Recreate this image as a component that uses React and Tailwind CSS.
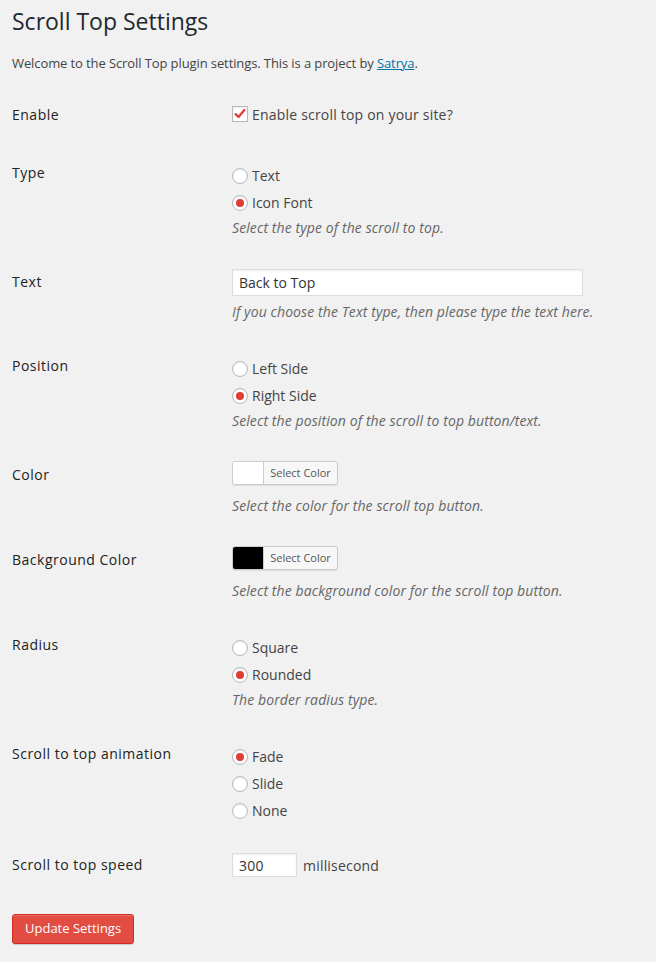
import { useState } from "react";

const font = { fontFamily: '"Open Sans", "Liberation Sans", sans-serif' };

function Radio({ checked, label }) {
    return (
        <label className="flex h-[27px] items-center gap-[4px] text-[14px] text-[#444]">
            <span className="flex h-4 w-4 items-center justify-center rounded-full border border-[#b4b9be] bg-white shadow-[inset_0_1px_2px_rgba(0,0,0,0.07)]">
                {checked && <span className="h-2 w-2 rounded-full bg-[#dd3d36]" />}
            </span>
            {label}
        </label>
    );
}

function Desc({ children, className = "" }) {
    return (
        <p className={`text-[14px] italic leading-[18px] tracking-[0.1px] text-[#666] ${className}`}>{children}</p>
    );
}

function Row({ label, children, bottom = "pb-[15px]" }) {
    return (
        <div className="grid grid-cols-[220px_1fr]">
            <div className="pt-[21px] text-[14px] leading-[18px] tracking-[0.5px] text-[#222]">{label}</div>
            <div className={`pt-[15px] ${bottom}`}>{children}</div>
        </div>
    );
}

function ColorPicker({ color }) {
    return (
        <div className="mt-px flex h-[24px] w-[106px] overflow-hidden rounded-[3px] border border-[#ccc] bg-[#f7f7f7] shadow-[0_1px_0_rgba(0,0,0,0.08)]">
            <span className="w-[31px] border-r border-[#ccc]" style={{ background: color }} />
            <span className="flex flex-1 items-center justify-center text-[11px] text-[#555]">Select Color</span>
        </div>
    );
}

export default function App() {
    const [text, setText] = useState("Back to Top");
    const [speed, setSpeed] = useState("300");

    return (
        <div className="min-h-[962px] bg-[#f1f1f1] px-[12px]" style={font}>
            <h2 className="pt-[7px] text-[23px] leading-[29px] text-[#23282d]">Scroll Top Settings</h2>
            <p className="mt-[18px] text-[13px] leading-[18px] tracking-[-0.1px] text-[#444]">
                Welcome to the Scroll Top plugin settings. This is a project by{" "}
                <a className="text-[#0073aa] underline">Satrya</a>.
            </p>

            <div className="mt-[13px]">
                <Row label="Enable">
                    <label className="flex h-[28px] items-center gap-[4px] text-[14px] tracking-[0.2px] text-[#444]">
                        <span className="flex h-4 w-4 items-center justify-center border border-[#b4b9be] bg-white shadow-[inset_0_1px_2px_rgba(0,0,0,0.07)]">
                            <svg viewBox="0 0 16 16" className="h-[14px] w-[14px]">
                                <path d="M3 8.2 L6.3 11.5 L13 3.5" fill="none" stroke="#dd3d36" strokeWidth="2.6" strokeLinecap="round" strokeLinejoin="round" />
                            </svg>
                        </span>
                        Enable scroll top on your site?
                    </label>
                </Row>

                <Row label="Type">
                    <div className="pt-[4px]">
                        <Radio label="Text" />
                        <Radio checked label="Icon Font" />
                    </div>
                    <Desc className="mt-[3px]">Select the type of the scroll to top.</Desc>
                </Row>

                <Row label="Text">
                    <input
                        value={text}
                        onChange={(e) => setText(e.target.value)}
                        className="mt-[2px] block h-[27px] w-[351px] border border-[#ddd] bg-white px-[6px] text-[14px] text-[#333] shadow-[inset_0_1px_2px_rgba(0,0,0,0.07)] outline-none"
                    />
                    <Desc className="mt-[7px]">If you choose the Text type, then please type the text here.</Desc>
                </Row>

                <Row label="Position">
                    <div className="pt-[4px]">
                        <Radio label="Left Side" />
                        <Radio checked label="Right Side" />
                    </div>
                    <Desc className="mt-[3px]">Select the position of the scroll to top button/text.</Desc>
                </Row>

                <Row label="Color">
                    <ColorPicker color="#ffffff" />
                    <Desc className="mt-[12px]">Select the color for the scroll top button.</Desc>
                </Row>

                <Row label="Background Color">
                    <ColorPicker color="#000000" />
                    <Desc className="mt-[12px]">Select the background color for the scroll top button.</Desc>
                </Row>

                <Row label="Radius">
                    <div className="pt-[4px]">
                        <Radio label="Square" />
                        <Radio checked label="Rounded" />
                    </div>
                    <Desc className="mt-[3px]">The border radius type.</Desc>
                </Row>

                <Row label="Scroll to top animation" bottom="pb-[11px]">
                    <div className="pt-[4px]">
                        <Radio checked label="Fade" />
                        <Radio label="Slide" />
                        <Radio label="None" />
                    </div>
                </Row>

                <Row label="Scroll to top speed">
                    <div className="flex items-center gap-[6px] pt-[3px] text-[14px] tracking-[0.2px] text-[#444]">
                        <input
                            value={speed}
                            onChange={(e) => setSpeed(e.target.value)}
                            className="block h-[24px] w-[65px] border border-[#ddd] bg-white px-[6px] text-[14px] text-[#333] shadow-[inset_0_1px_2px_rgba(0,0,0,0.07)] outline-none"
                        />
                        millisecond
                    </div>
                </Row>
            </div>

            <button className="mt-[22px] h-[30px] rounded-[3px] border border-[#d02c21] bg-[#e14d43] px-[12px] text-[13px] text-white shadow-[inset_0_1px_0_rgba(255,255,255,0.2),0_1px_0_rgba(0,0,0,0.15)]">
                Update Settings
            </button>
        </div>
    );
}
